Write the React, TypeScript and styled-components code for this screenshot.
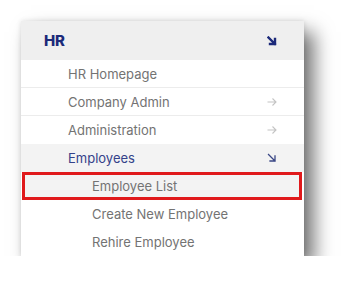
import React from "react";
import styled, { createGlobalStyle } from "styled-components";

const Global = createGlobalStyle`
  html, body { margin: 0; padding: 0; background: #ffffff; }
  body { font-family: Inter, "Noto Sans", sans-serif; }
`;

const Page = styled.div`
  padding: 21px 0 0 21px;
`;

const Panel = styled.div`
  width: 283px;
  background: #ffffff;
  display: flex;
  flex-direction: column;
  box-shadow: 10px 11px 18px rgba(0, 0, 0, 0.55), 0 0 5px rgba(0, 0, 0, 0.12);
`;

const Header = styled.div`
  height: 39px;
  background: #efefef;
  display: flex;
  align-items: center;
  justify-content: space-between;
  padding: 0 27px 0 23px;
`;

const HeaderTitle = styled.span`
  font-size: 15px;
  font-weight: 800;
  color: #1c2a7a;
  letter-spacing: -0.2px;
`;

const Row = styled.div<{ $level: number; $active?: boolean; $divider?: boolean; $highlight?: boolean }>`
  box-sizing: border-box;
  height: 28px;
  display: flex;
  align-items: center;
  justify-content: space-between;
  padding: 0 27px 0 ${(p) => (p.$level === 1 ? 47 : 71)}px;
  background: ${(p) => (p.$active || p.$highlight ? "#f3f3f3" : "#ffffff")};
  border-bottom: ${(p) => (p.$divider ? "1px solid #ececec" : "none")};
  ${(p) =>
    p.$highlight
      ? `box-shadow: inset 0 0 0 3px #e0191b; margin: 0 2px 0 1px; padding-left: 70px;`
      : ""}
`;

const Label = styled.span<{ $active?: boolean }>`
  font-size: 13px;
  color: ${(p) => (p.$active ? "#34428a" : "#737373")};
  white-space: nowrap;
`;

const DiagArrow = ({ bold }: { bold?: boolean }) => (
  <svg width="10" height="10" viewBox="0 0 10 10" fill="none">
    <path
      d="M1.5 1.5 L8 8 M8 3 V8 H3"
      stroke={bold ? "#1c2a7a" : "#3a4785"}
      strokeWidth={bold ? 2.4 : 1.3}
      strokeLinecap="square"
    />
  </svg>
);

const RightArrow = () => (
  <svg width="10" height="10" viewBox="0 0 10 10" fill="none">
    <path d="M0.5 5 H9 M5.5 1.5 L9 5 L5.5 8.5" stroke="#c4c4c4" strokeWidth="1.1" />
  </svg>
);

export default function App() {
  return (
    <>
      <Global />
      <Page>
        <Panel>
          <Header>
            <HeaderTitle>HR</HeaderTitle>
            <DiagArrow bold />
          </Header>
          <Row $level={1} $divider>
            <Label>HR Homepage</Label>
          </Row>
          <Row $level={1} $divider>
            <Label>Company Admin</Label>
            <RightArrow />
          </Row>
          <Row $level={1}>
            <Label>Administration</Label>
            <RightArrow />
          </Row>
          <Row $level={1} $active>
            <Label $active>Employees</Label>
            <DiagArrow />
          </Row>
          <Row $level={2} $highlight>
            <Label>Employee List</Label>
          </Row>
          <Row $level={2}>
            <Label>Create New Employee</Label>
          </Row>
          <Row $level={2}>
            <Label>Rehire Employee</Label>
          </Row>
        </Panel>
      </Page>
    </>
  );
}
